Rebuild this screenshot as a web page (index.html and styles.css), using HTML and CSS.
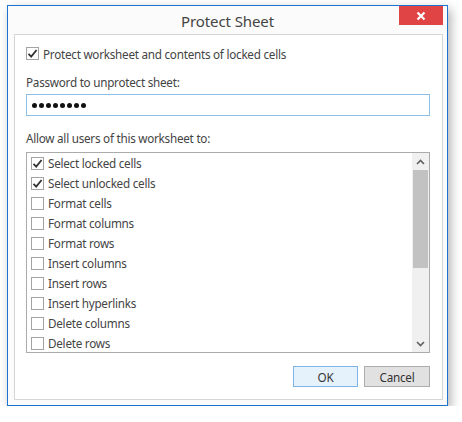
FILE: index.html
```html
<!DOCTYPE html>
<html>
<head>
<meta charset="utf-8">
<link rel="stylesheet" href="styles.css">
</head>
<body>
<div class="window">
  <div class="titlebar">
    <div class="title">Protect Sheet</div>
    <div class="close"><svg width="10" height="10" viewBox="0 0 10 10"><path d="M1.5 1.5 L8.5 8.5 M8.5 1.5 L1.5 8.5" stroke="#fff" stroke-width="2.2" fill="none"/></svg></div>
  </div>
  <div class="panel">
    <label class="check-row top">
      <span class="box"><svg width="11" height="11" viewBox="0 0 11 11"><path d="M1.5 5.8 L4.2 8.6 L9.6 2" stroke="#333" stroke-width="1.8" fill="none"/></svg></span>
      <span>Protect worksheet and contents of locked cells</span>
    </label>
    <div class="label pw-label">Password to unprotect sheet:</div>
    <div class="input"><span class="dot"></span><span class="dot"></span><span class="dot"></span><span class="dot"></span><span class="dot"></span><span class="dot"></span><span class="dot"></span><span class="dot"></span></div>
    <div class="label allow-label">Allow all users of this worksheet to:</div>
    <div class="list">
      <div class="items">
        <div class="item"><span class="box"><svg width="11" height="11" viewBox="0 0 11 11"><path d="M1.5 5.8 L4.2 8.6 L9.6 2" stroke="#333" stroke-width="1.8" fill="none"/></svg></span><span>Select locked cells</span></div>
        <div class="item"><span class="box"><svg width="11" height="11" viewBox="0 0 11 11"><path d="M1.5 5.8 L4.2 8.6 L9.6 2" stroke="#333" stroke-width="1.8" fill="none"/></svg></span><span>Select unlocked cells</span></div>
        <div class="item"><span class="box"></span><span>Format cells</span></div>
        <div class="item"><span class="box"></span><span>Format columns</span></div>
        <div class="item"><span class="box"></span><span>Format rows</span></div>
        <div class="item"><span class="box"></span><span>Insert columns</span></div>
        <div class="item"><span class="box"></span><span>Insert rows</span></div>
        <div class="item"><span class="box"></span><span>Insert hyperlinks</span></div>
        <div class="item"><span class="box"></span><span>Delete columns</span></div>
        <div class="item"><span class="box"></span><span>Delete rows</span></div>
      </div>
      <div class="scrollbar">
        <div class="arrow"><svg width="9" height="6" viewBox="0 0 9 6"><path d="M1 5 L4.5 1.5 L8 5" stroke="#606060" stroke-width="1.6" fill="none"/></svg></div>
        <div class="track"><div class="thumb"></div></div>
        <div class="arrow"><svg width="9" height="6" viewBox="0 0 9 6"><path d="M1 1 L4.5 4.5 L8 1" stroke="#606060" stroke-width="1.6" fill="none"/></svg></div>
      </div>
    </div>
    <div class="buttons">
      <div class="btn ok">OK</div>
      <div class="btn cancel">Cancel</div>
    </div>
  </div>
</div>
</body>
</html>
```
FILE: styles.css
```css
html, body {
  margin: 0;
  padding: 0;
  background: #ffffff;
}
body {
  font-family: "Noto Sans", "Open Sans", sans-serif;
  font-size: 11.7px;
  letter-spacing: -0.25px;
  color: #444444;
}
.window {
  margin: 5px 0 0 7px;
  width: 441px;
  height: 401px;
  box-sizing: border-box;
  border: 1px solid #1c74cf;
  background: #fbfbfb;
  box-shadow: 3px 4px 10px rgba(0, 0, 0, 0.3);
  display: flex;
  flex-direction: column;
}
.titlebar {
  position: relative;
  height: 28px;
  display: flex;
  align-items: center;
  justify-content: center;
}
.title {
  font-size: 15px;
  letter-spacing: -0.1px;
  color: #444;
  margin-top: 1px;
}
.close {
  position: absolute;
  right: 4px;
  top: 0;
  width: 44px;
  height: 19px;
  background: #e04444;
  display: flex;
  align-items: center;
  justify-content: center;
}
.panel {
  margin: 0 4px 5px 6px;
  flex: 1;
  border: 1px solid #d6d6d6;
  background: #ffffff;
  padding: 0 12px 0 11px;
  display: flex;
  flex-direction: column;
}
.check-row, .item {
  display: flex;
  align-items: center;
}
.box {
  width: 13px;
  height: 13px;
  box-sizing: border-box;
  border: 1px solid #a3a3a3;
  background: #fff;
  display: flex;
  align-items: center;
  justify-content: center;
  flex: none;
}
.check-row.top {
  margin-top: 12px;
  height: 13px;
}
.check-row .box {
  margin-right: 4px;
}
.label {
  height: 16px;
  line-height: 16px;
}
.pw-label {
  margin-top: 14px;
}
.input {
  margin-top: 4px;
  height: 22px;
  box-sizing: border-box;
  border: 1px solid #8dc0e8;
  display: flex;
  align-items: center;
  gap: 2px;
  padding-left: 5px;
}
.dot {
  width: 5px;
  height: 5px;
  border-radius: 50%;
  background: #111;
}
.allow-label {
  margin-top: 14px;
}
.list {
  margin-top: 6px;
  height: 201px;
  box-sizing: border-box;
  border: 1px solid #ababab;
  display: flex;
  overflow: hidden;
}
.items {
  flex: 1;
  padding-left: 4px;
}
.item {
  height: 20px;
}
.item .box {
  margin-right: 4px;
}
.scrollbar {
  width: 17px;
  background: #f0f0f0;
  display: flex;
  flex-direction: column;
}
.arrow {
  height: 17px;
  display: flex;
  align-items: center;
  justify-content: center;
  flex: none;
}
.track {
  flex: 1;
  padding: 0 1px;
}
.thumb {
  height: 98px;
  background: #c2c2c2;
}
.buttons {
  margin-top: 13px;
  display: flex;
  justify-content: flex-end;
  gap: 6px;
}
.btn {
  height: 21px;
  box-sizing: border-box;
  display: flex;
  align-items: center;
  justify-content: center;
  color: #333;
}
.btn.ok {
  width: 65px;
  background: #e5f1fb;
  border: 1px solid #7eb4ea;
}
.btn.cancel {
  width: 66px;
  background: #e1e1e1;
  border: 1px solid #adadad;
}
```
